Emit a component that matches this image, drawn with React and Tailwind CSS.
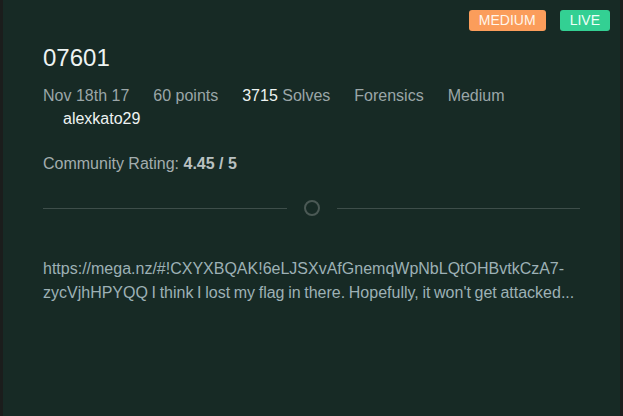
export default function App() {
  const font = { fontFamily: '"Liberation Sans", Arial, sans-serif' };
  return (
    <div className="w-[623px] h-[416px] bg-[#1b1d1c] px-[3px]" style={font}>
      <div className="h-full bg-[#172a25] flex flex-col">
        <div className="flex justify-end gap-[14px] pt-[10px] pr-[10px]">
          <span className="h-[21px] px-[10px] rounded-[3px] bg-[#fb9d5b] text-[#fff6ec] text-[14px] leading-[21px]">MEDIUM</span>
          <span className="h-[21px] px-[10px] rounded-[3px] bg-[#33d093] text-[#effff8] text-[14px] leading-[21px]">LIVE</span>
        </div>
        <div className="px-[40px]">
          <h1 className="mt-[13px] text-[24px] leading-[28px] text-[#eef3f2]">07601</h1>
          <div className="mt-[12px] flex gap-[24px] text-[16px] leading-[23px] text-[#9ba6a8]">
            <span>Nov 18th 17</span>
            <span>60 points</span>
            <span><span className="text-[#eef3f2]">3715</span> Solves</span>
            <span>Forensics</span>
            <span>Medium</span>
          </div>
          <div className="pl-[20px] text-[16px] leading-[23px] text-[#eef3f2]">alexkato29</div>
          <div className="mt-[22px] text-[16px] leading-[23px] text-[#a3adae]">
            Community Rating: <span className="font-bold text-[#b9c1c1]">4.45 / 5</span>
          </div>
          <div className="mt-[25px] flex items-center gap-[17px]">
            <div className="flex-1 h-px bg-[#3e4e4a]" />
            <div className="w-[16px] h-[16px] rounded-full border-2 border-[#4b5955]" />
            <div className="flex-1 h-px bg-[#3e4e4a]" />
          </div>
          <p className="mt-[41px] text-[16px] leading-[24px] text-[#9db1b5] [word-spacing:-0.8px]">
            https://mega.nz/#!CXYXBQAK!6eLJSXvAfGnemqWpNbLQtOHBvtkCzA7-zycVjhHPYQQ I think I lost my flag in there. Hopefully, it won't get attacked...
          </p>
        </div>
      </div>
    </div>
  );
}
